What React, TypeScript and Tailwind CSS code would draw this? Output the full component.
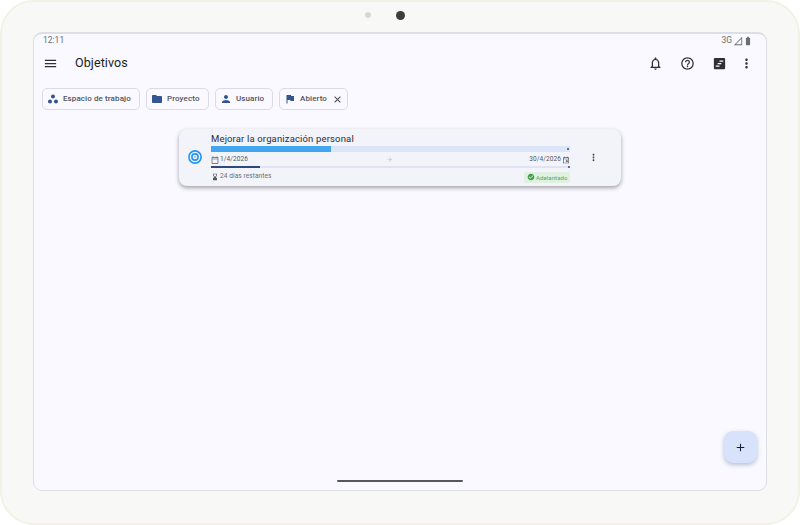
import React from 'react';
import {
  MdMenu, MdNotificationsNone, MdHelpOutline, MdViewTimeline, MdMoreVert, MdWorkspaces, MdFolder, MdPerson,
  MdFlag, MdClose, MdAdd, MdOutlineCalendarToday, MdOutlineEvent, MdArrowForward, MdHourglassBottom,
  MdCheckCircle, MdSignalCellular0Bar, MdBatteryFull,
} from 'react-icons/md';

const Chip = ({ icon, label, close, width }: { icon: React.ReactNode; label: string; close?: boolean; width: string }) => (
  <div className={`flex h-[22px] items-center whitespace-nowrap rounded-[5px] border border-[#d9dce6] pl-[4px] text-[8px] font-medium tracking-[0.1px] text-[#50535b] ${width}`}>
    <span className="mr-[4px] text-[#34558f]">{icon}</span>
    <span>{label}</span>
    {close && <MdClose className="ml-[5px] shrink-0 text-[#44474f]" size={11} />}
  </div>
);

const Target = () => (
  <svg width="14" height="14" viewBox="0 0 14 14" fill="none" className="-mt-[2px] shrink-0">
    <circle cx="7" cy="7" r="6.1" stroke="#2196f3" strokeWidth="1.6" />
    <circle cx="7" cy="7" r="3.1" stroke="#2196f3" strokeWidth="1.6" />
    <circle cx="7" cy="7" r="1" fill="#7cc2f7" />
  </svg>
);

export default function App() {
  return (
    <div className="h-[525px] w-[800px] overflow-hidden bg-white font-['Roboto',sans-serif]">
      <div className="flex h-[525px] w-[800px] flex-col rounded-[34px] border-2 border-[#f3f0e6] bg-[#f8f8f6] px-[31px] pb-[32px]">
        <div className="relative flex h-[30px] shrink-0 items-start justify-center pt-[9px]">
          <div className="h-[9px] w-[9px] rounded-full bg-[#3d3d3f]" />
          <div className="absolute left-[332px] top-[10px] h-[6px] w-[6px] rounded-full bg-[#d8d8d8]" />
        </div>

        <div className="relative flex flex-1 flex-col rounded-[9px] border border-t-2 border-[#dddfe6] bg-[#f9f9ff]">
          <div className="flex h-[13px] items-center justify-between pl-[9px] pr-[13px] text-[8.5px] text-[#6b6d72]">
            <span>12:11</span>
            <div className="flex items-center">
              <span className="mr-[1px]">3G</span>
              <MdSignalCellular0Bar size={10} />
              <MdBatteryFull size={10} />
            </div>
          </div>

          <div className="flex h-[31px] items-center pl-[9px] pr-[12px] pt-[2px] text-[#1a1c20]">
            <MdMenu size={15} className="text-[#2e3036]" />
            <span className="ml-[17px] text-[12.5px] tracking-[0.1px]">Objetivos</span>
            <div className="ml-auto flex items-center gap-[17px] text-[#2e3036]">
              <MdNotificationsNone size={15} />
              <MdHelpOutline size={15} />
              <MdViewTimeline size={15} />
              <MdMoreVert size={15} className="-ml-[5px]" />
            </div>
          </div>

          <div className="mt-[10px] flex gap-[6px] pl-[8px]">
            <Chip icon={<MdWorkspaces size={12} />} label="Espacio de trabajo" width="w-[98px]" />
            <Chip icon={<MdFolder size={12} />} label="Proyecto" width="w-[63px]" />
            <Chip icon={<MdPerson size={12} />} label="Usuario" width="w-[58px]" />
            <Chip icon={<MdFlag size={12} />} label="Abierto" close width="w-[69px]" />
          </div>

          <div className="mt-[19px] flex justify-center">
            <div className="flex h-[57px] w-[442px] items-center rounded-[8px] bg-[#f2f4fa] pl-[9px] shadow-[0_2px_4px_rgba(0,0,0,0.35)]">
              <Target />
              <div className="ml-[9px] w-[359px]">
                <div className="text-[9.5px] leading-[12px] tracking-[0.15px] text-[#2a2c33]">Mejorar la organización personal</div>
                <div className="mt-[1px] flex h-[6px] justify-end bg-[#dce5f7]">
                  <div className="mr-auto h-[6px] w-[120px] bg-[#42a5f0]" />
                  <div className="mr-[1px] mt-[2px] h-[2px] w-[2px] rounded-full bg-[#2d4a8a]" />
                </div>
                <div className="mt-[2px] flex h-[12px] items-center text-[6.5px] tracking-[0.1px] text-[#55585f]">
                  <MdOutlineCalendarToday size={8} />
                  <span className="ml-[1px]">1/4/2026</span>
                  <MdArrowForward size={7} className="ml-[138px] text-[#b9bcc5]" />
                  <span className="ml-auto mr-[1px]">30/4/2026</span>
                  <MdOutlineEvent size={8} />
                </div>
                <div className="flex h-[2px] justify-end bg-[#dfe3f5]">
                  <div className="mr-auto h-[2px] w-[49px] bg-[#2d4a7a]" />
                  <div className="h-[2px] w-[2px] rounded-full bg-[#2d4a8a]" />
                </div>
                <div className="mt-[4px] flex items-center text-[6.5px] tracking-[0.1px] text-[#6a6d75]">
                  <MdHourglassBottom size={8} className="text-[#55585f]" />
                  <span className="ml-[1px]">24 días restantes</span>
                  <div className="ml-auto flex h-[11px] w-[46px] items-center rounded-[2px] bg-[#e0f0e3] pl-[3px] text-[#4caf50]">
                    <MdCheckCircle size={8} className="text-[#43a047]" />
                    <span className="ml-[1px] text-[6px]">Adelantado</span>
                  </div>
                </div>
              </div>
              <MdMoreVert size={11} className="ml-[18px] text-[#44474f]" />
            </div>
          </div>

          <button className="absolute bottom-[27px] right-[9px] flex h-[32px] w-[33px] items-center justify-center rounded-[9px] bg-[#d8e2fb] text-[#14213d] shadow-[0_2px_4px_rgba(40,60,110,0.3)]">
            <MdAdd size={13} />
          </button>
          <div className="absolute bottom-[8px] left-[303px] h-[2px] w-[126px] rounded-full bg-[#55575f]" />
        </div>
      </div>
    </div>
  );
}
